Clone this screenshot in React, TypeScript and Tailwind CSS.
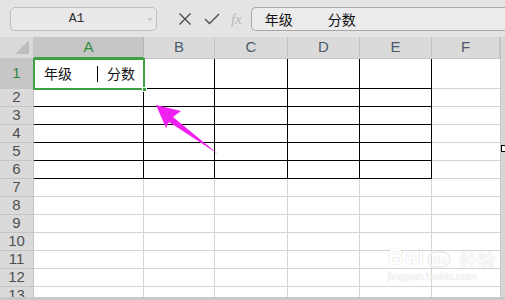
import { Fragment } from "react"

const cols = [
  { name: "A", w: "w-[110px]" },
  { name: "B", w: "w-[71px]" },
  { name: "C", w: "w-[73px]" },
  { name: "D", w: "w-[72px]" },
  { name: "E", w: "w-[72px]" },
  { name: "F", w: "w-[68px]" },
]

const rows = Array.from({ length: 13 }, (_, i) => i + 1)

const cjk = "font-['Noto_Sans_CJK_SC','Noto_Sans',sans-serif]"

export default function App() {
  return (
    <div className="relative w-[505px] h-[300px] overflow-hidden bg-[#e4e4e4] font-['Liberation_Sans',Arial,sans-serif]">
      {/* formula bar */}
      <div className="flex items-center h-[37px] pt-[1px]">
        <div className="relative ml-[10px] w-[147px] h-[24px] rounded-[5px] border border-[#bdbdbd] bg-[#e9e9e9] flex items-center justify-center">
          <span className="font-['Liberation_Mono',monospace] text-[13px] text-[#333] -ml-[14px]">A1</span>
          <span className="absolute right-[3px] top-[10px] w-0 h-0 border-l-[3px] border-r-[3px] border-t-[3px] border-l-transparent border-r-transparent border-t-[#c8c8c8]" />
        </div>
        <div className="flex items-center ml-[21px] gap-[12px]">
          <svg width="14" height="14" viewBox="0 0 14 14">
            <path d="M1.5 1.5 L12.5 12.5 M12.5 1.5 L1.5 12.5" stroke="#4a4a4a" strokeWidth="1.3" fill="none" />
          </svg>
          <svg width="16" height="14" viewBox="0 0 16 14">
            <path d="M1 7 L5.5 11.5 L15 2" stroke="#4a4a4a" strokeWidth="1.3" fill="none" />
          </svg>
          <span className="italic text-[15px] text-[#b8b8b8] font-['Liberation_Serif',serif] -ml-[1px]">fx</span>
        </div>
        <div className={`ml-[9px] flex-1 h-[24px] rounded-l-[5px] border border-r-0 border-[#a8a8a8] bg-[#ececec] flex items-center pl-[13px] text-[14px] text-[#111] ${cjk}`}>
          <span>年级</span>
          <span className="ml-[35px]">分数</span>
        </div>
      </div>

      {/* grid */}
      <div className="flex">
        <div className="flex flex-col">
          <div className="flex h-[22px]">
            <div className="w-[34px] h-full border-r border-b border-[#c4c4c4] bg-[#dadada] flex items-end justify-end pr-[4px] pb-[4px]">
              <svg width="14" height="14" viewBox="0 0 14 14">
                <polygon points="14,0 14,14 0,14" fill="#bdbdbd" />
              </svg>
            </div>
            {cols.map((c, i) => (
              <div
                key={c.name}
                className={`${c.w} h-full flex items-center justify-center text-[15px] border-r ${
                  i === 0
                    ? "bg-[#c6c6c6] text-[#2e8b3a] border-b-2 border-b-[#3ea043] border-r-[#b8b8b8]"
                    : "bg-[#dadada] text-[#4a5a6a] border-b border-b-[#c4c4c4] border-r-[#c4c4c4]"
                }`}
              >
                {c.name}
              </div>
            ))}
          </div>
          {rows.map((r) => {
            const inTable = r <= 6
            return (
              <div key={r} className={`flex ${r === 1 ? "h-[30px]" : "h-[18px]"}`}>
                <div
                  className={`w-[34px] h-full flex items-center justify-center text-[15px] border-r border-b border-[#c4c4c4] ${
                    r === 1 ? "bg-[#c6c6c6] text-[#2e8b3a]" : "bg-[#dadada] text-[#505050]"
                  }`}
                >
                  {r}
                </div>
                {cols.map((c, i) => {
                  const black = inTable && i < 5
                  return (
                    <Fragment key={c.name}>
                      <div
                        className={`${c.w} h-full bg-white border-b ${
                          black ? "border-b-black" : "border-b-[#d4d4d4]"
                        } ${i === 5 ? "border-r-0" : "border-r"} ${
                          black ? "border-r-black" : "border-r-[#d4d4d4]"
                        } ${r === 1 && i === 0 ? `flex items-center pl-[10px] text-[14px] text-[#111] ${cjk}` : ""}`}
                      >
                        {r === 1 && i === 0 && (
                          <>
                            <span>年级</span>
                            <span className="ml-[25px] mr-[9px] w-[1px] h-[16px] bg-black" />
                            <span>分数</span>
                          </>
                        )}
                      </div>
                    </Fragment>
                  )
                })}
              </div>
            )
          })}
        </div>
        <div className="w-[5px] bg-[#d6d6d6] border-l border-[#c4c4c4]" />
      </div>

      {/* selection around A1 */}
      <div className="absolute left-[33px] top-[58px] w-[112px] h-[32px] border-2 border-[#3ea043] pointer-events-none" />
      <div className="absolute left-[142px] top-[87px] w-[5px] h-[5px] bg-[#3ea043] border border-white" />

      {/* arrow */}
      <svg className="absolute left-0 top-0 pointer-events-none" width="505" height="300">
        <polygon points="156,105 181,111 173,117 218,154 169,122 166,128" fill="#f020f0" />
      </svg>

      {/* watermark */}
      <div className="absolute left-[388px] top-[246px] text-white leading-none select-none [text-shadow:0_0_1px_rgba(0,0,0,0.25)]">
        <div className="flex items-end gap-[2px]">
          <span className="text-[22px] font-bold tracking-[1px]">Bai</span>
          <span className="text-[13px] font-bold border-2 border-[#eeeeee] rounded-full px-[2px]">du</span>
          <span className={`text-[18px] ml-[6px] ${cjk}`}>经验</span>
        </div>
        <div className="text-[11px] mt-[3px]">jingyan.baidu.com</div>
      </div>

      {/* small handles */}
      <div className="absolute left-[501px] top-[145px] w-[5px] h-[7px] border border-black bg-white" />
      <div className="absolute left-[247px] top-[297px] w-[7px] h-[5px] border border-black bg-white" />
      <div className="absolute left-0 top-[297px] w-[505px] h-[3px] bg-[#c8c8c8]" />
    </div>
  )
}
